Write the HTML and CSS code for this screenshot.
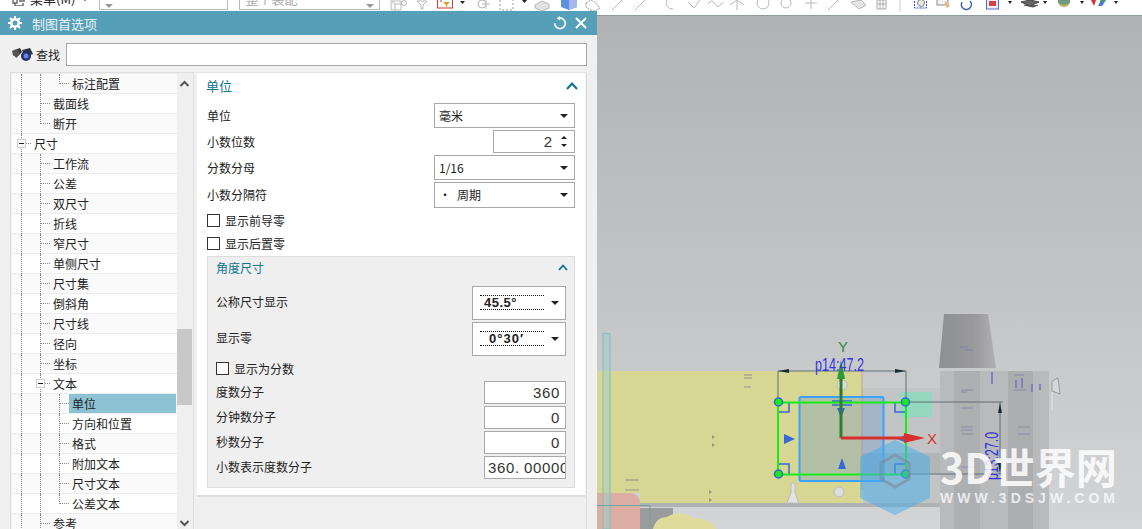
FILE: index.html
```html
<!DOCTYPE html>
<html lang="zh-CN">
<head>
    <meta charset="UTF-8" />
    <title>制图首选项</title>
    <link rel="stylesheet" href="styles.css">
</head>
<body>

<!-- top toolbar, mostly hidden behind the dialog -->
<div class="toolbar">
    <div class="menu-btn">
        <svg class="menu-icon" width="14" height="10" viewBox="0 0 14 10"><path d="M1 1h4v6H1zM7 2h6M7 5h6M3 7v3h8V7" fill="none" stroke="#666" stroke-width="1.4"/></svg>
        <span>菜单(M)</span><span class="caret"></span>
    </div>
    <div class="tb-select wide"><span class="arrow grey"></span></div>
    <div class="tb-select"><span class="tb-text">整个装配</span><span class="arrow grey"></span></div>
    <svg class="tb-icons" width="762" height="15" viewBox="380 0 762 15">
        <g fill="none" stroke="#b8b8b8">
            <path d="M391 1h10v9h-10zM391 1l4 3h6M395 4v6"/>
            <circle cx="404" cy="3" r="2.5"/>
            <path d="M417 1h10l-4 4v4h-2V5z"/>
            <path d="M482 4h8M486 0v9"/><circle cx="482" cy="4" r="4"/>
            <path d="M500 0v10h13V0" stroke-dasharray="2 2" stroke="#999"/>
            <path d="M535 5l7-4 7 3v4l-7 3-7-3z" fill="#e2e2e2"/>
            <path d="M586 3l5-3 5 3 4 5-5 3-5-1-4-3z" stroke-dasharray="2 1" stroke="#999"/>
            <path d="M612 10l10-10M635 10l10-10M667 0a6 6 0 0 0 6 9M688 2l6 6 6-8M708 4q4-6 7 0t8-2M730 5l7-5 7 5M737 1v9"/>
            <circle cx="763" cy="3" r="6"/>
            <circle cx="786" cy="3" r="5"/>
            <path d="M805 3h12M811 0v9M828 10l10-10"/>
            <path d="M851 2l10-2 5 5-7 4z" fill="#e6e6e6"/>
            <path d="M877 0h9v9h-9zM880 0v9M883 0v9M877 4h9" stroke="#aaa"/>
            <path d="M900 0v12" stroke="#ccc"/>
        </g>
        <rect x="437.5" y="-3" width="15" height="11" fill="#fff" stroke="#c8383c"/>
        <path d="M443 2h7l-3 3v2h-1V5z" fill="#d8a020"/>
        <path d="M440 1h2" stroke="#c8383c"/>
        <path d="M561 -2l8-2 8 2v9l-8 3-8-3z" fill="#5b8fe0"/>
        <path d="M569 0l8-2v9l-8 3z" fill="#a8b8ea"/>
        <rect x="914.5" y="-2" width="12" height="10" fill="none" stroke="#2a4fd8" stroke-dasharray="2 1"/>
        <circle cx="921" cy="3" r="3.5" fill="#e6e6e6" stroke="#888"/>
        <rect x="937" y="-1" width="11" height="6" fill="#f2f2f2" stroke="#8a8aa0"/>
        <path d="M946 1l4 5-3 2-3-4z" fill="#e3b98a"/>
        <path d="M962 2a5 5 0 1 0 8-1" fill="none" stroke="#3a5fb0" stroke-width="1.5"/>
        <rect x="986.5" y="-2" width="12" height="11" fill="#eef" stroke="#5a6ac8"/>
        <rect x="989" y="1" width="7" height="5" fill="#d84040"/>
        <path d="M1021 2l9-2 9 2-9 4zM1024 5l9 2 5-2" fill="#666" stroke="#444"/>
        <ellipse cx="1064" cy="1" rx="6" ry="6" fill="#b8b060"/>
        <path d="M1058 3q6 3 12 0v-3h-12z" fill="#6f9a80"/>
        <path d="M1091 0h5l-2 6z" fill="#d83030"/>
        <path d="M1095 0l3 6 3-6 5 0-4 6h-4z" fill="#5078d0"/>
        <path d="M1100 1l5-1" stroke="#40a040"/>
        <g fill="#222">
            <path d="M460 1h5l-2.500 3zM522 0h5l-2.500 3zM1008 1h4l-2 3zM1043 1h4l-2 3zM1080 1h4l-2 3zM1114 1h4l-2 3z"/>
        </g>
    </svg>
</div>

<!-- graphics area -->
<div class="canvas">
    <svg class="scene" width="1142" height="513" viewBox="0 16 1142 513">
        <defs>
            <linearGradient id="bg" x1="0" y1="0" x2="0" y2="1">
                <stop offset="0" stop-color="#b1b2b4"/>
                <stop offset="1" stop-color="#d3d4d6"/>
            </linearGradient>
            <linearGradient id="cone" x1="0" y1="0" x2="1" y2="0">
                <stop offset="0" stop-color="#8e8f91"/>
                <stop offset=".6" stop-color="#99999b"/>
                <stop offset="1" stop-color="#b0b0b2"/>
            </linearGradient>
        </defs>
        <rect x="597" y="16" width="545" height="513" fill="url(#bg)"/>

        <!-- part behind -->
        <rect x="863" y="388" width="78" height="117" fill="#c3c4c6"/>
        <rect x="863" y="453" width="78" height="20" fill="#b3b4b6"/>
        <rect x="597" y="503" width="344" height="4" fill="#b0b1b3"/>
        <rect x="640" y="508" width="33" height="21" fill="#9a9b9d"/>
        <path d="M597 529v-36h32q11 0 11 12v24z" fill="#dcaea3"/>
        <path d="M653 529q3-12 14-12 6-4 14-3 8 0 12 4 18 0 23 11z" fill="#dedb9b"/>

        <!-- yellow sheet -->
        <rect x="597" y="371" width="265" height="122" fill="#d8d693"/>
        <rect x="640" y="493" width="222" height="10" fill="#d8d693"/>
        <rect x="861" y="371" width="2" height="118" fill="#c9b8a0"/>
        <path d="M744 375h8M744 378h8M744 387h7M625 480h14M625 490h14" stroke="#aaa98a" stroke-width="1.500"/>
        <path d="M712 435l3 2-3 2zM712 443l3 2-3 2zM709 490l3 2-3 2zM709 498l3 2-3 2z" fill="#99987a"/>
        <path d="M603 333l7 1v195h-7z" fill="#a0cfc5" fill-opacity=".5" stroke="#7fbfc0"/>
        <path d="M597 505.500h53v24" fill="none" stroke="#6fa5a5" stroke-width="1"/>

        <!-- tall part on the right -->
        <rect x="940" y="371" width="109" height="158" fill="#b9babc"/>
        <rect x="954" y="371" width="26" height="158" fill="#aeafb1"/>
        <rect x="1008" y="371" width="25" height="158" fill="#acadaf"/>
        <path d="M944 314h44l8 54h-57z" fill="url(#cone)"/>
        <path d="M960 347h8M965 350h8" stroke="#7f7fa8"/>
        <g stroke="#8a8aa8">
            <path d="M961 390h12M961 392h6M961 408h12M961 430h12M961 427h12M961 467h14M961 434h12M1018 427h12M1018 434h12M1014 375h10M1014 390h12M1014 462h12"/>
            <path d="M992 372v12M1016 380v8M1022 378v10M1032 384v8M1040 384v6" stroke="#8080c0" stroke-width="2"/>
        </g>
        <path d="M1052 381l6-3 2 16-8-3z" fill="#d6d7d9" stroke="#999"/>
        <path d="M1052 392v18" stroke="#d8d8da" stroke-width="2"/>

        <!-- sketch handles -->
        <rect x="900" y="392" width="32" height="25" fill="#94d8c0"/>
        <rect x="799.500" y="397" width="84" height="84" rx="1.500" fill="#5e8fd0" fill-opacity=".3" stroke="#3aa2fa" stroke-width="2"/>
        <path d="M778 402v-31h128v31M906 402h97M1000 402v72M906 474h97" fill="none" stroke="#5d6f75"/>
        <path d="M778 371l11-2v4zM906 371l-11-2v4zM1000 403l-2 10h4zM1000 473l-2-10h4z" fill="#1a2a33"/>
        <circle cx="842" cy="385" r="5" fill="#ddd" stroke="#bbb"/>
        <circle cx="839" cy="492" r="5" fill="#ddd" stroke="#bbb"/>
        <path d="M791 493l-4 10h12l-4-10v-10h-4z" fill="#e3e3e5" stroke="#bbb"/>
        <g fill="none" stroke="#3468d8" stroke-width="1.500">
            <path d="M779 412h10v-10M895 402v10h10M779 464h10v10M895 474v-10h10"/>
            <path d="M832 401h20M832 405h20"/>
        </g>
        <path d="M784 434l11 5-11 5zM842 458l4 11h-8zM837 408h8l-4 10zM907 434v9l-10-4z" fill="#3468d8"/>
        <rect x="778" y="402.500" width="128" height="72" fill="none" stroke="#17ee17" stroke-width="2"/>
        <g fill="#17ee17" stroke="#3468d8" stroke-width="1.500">
            <circle cx="778.500" cy="402" r="4"/>
            <circle cx="905.500" cy="402" r="4"/>
            <circle cx="778.500" cy="474" r="4"/>
            <circle cx="905.500" cy="474" r="4"/>
        </g>

        <!-- axes -->
        <path d="M841 438v-62" stroke="#2f7d2f" stroke-width="3"/>
        <path d="M841 360l-4 19h8z" fill="#2f9a38"/>
        <path d="M841 438h66" stroke="#d83030" stroke-width="3"/>
        <path d="M925 438l-21-5v10z" fill="#d83030"/>
        <text class="axis-y" x="838" y="352">Y</text>
        <text class="axis-x" x="927" y="444">X</text>
        <text class="dim" x="815" y="371" textLength="49" lengthAdjust="spacingAndGlyphs">p14:47.2</text>
        <text class="dim" transform="translate(998 480) rotate(-90)" textLength="48" lengthAdjust="spacingAndGlyphs">p13:27.0</text>

        <!-- watermark -->
        <path d="M895 440l35 17v41l-35 17-35-17v-41z" fill="#43aeea" fill-opacity=".5"/>
        <path d="M881 463l14-8 14 8v16l-14 8-14-8z" fill="none" stroke="#7a8a96" stroke-opacity=".6" stroke-width="3"/>
        <text class="wm-big" x="940" y="484" textLength="177" lengthAdjust="spacingAndGlyphs">3D世界网</text>
        <text class="wm-small" x="940" y="503" textLength="175" lengthAdjust="spacing">WWW.3DSJW.COM</text>
    </svg>
</div>

<!-- dialog -->
<div class="dialog">
    <div class="titlebar">
        <svg class="gear" width="14" height="14" viewBox="0 0 14 14"><circle cx="7" cy="7" r="3.800" fill="none" stroke="#fff" stroke-width="2.600"/><path d="M7 0v3M7 11v3M0 7h3M11 7h3M2 2l2 2M10 10l2 2M12 2l-2 2M4 10l-2 2" stroke="#fff" stroke-width="2"/></svg>
        <span class="title-text">制图首选项</span>
        <svg class="reset" width="14" height="14" viewBox="0 0 14 14"><path d="M7 2a5.300 5.300 0 1 1-5.300 5.300" fill="none" stroke="#e8f3f6" stroke-width="1.800"/><path d="M7 0v4.500L3.500 2.200z" fill="#e8f3f6"/></svg>
        <svg class="close" width="12" height="12" viewBox="0 0 12 12"><path d="M1 1l10 10M11 1L1 11" stroke="#fff" stroke-width="2"/></svg>
    </div>

    <div class="search">
        <svg class="binoc" width="23" height="15" viewBox="0 0 23 15">
            <path d="M1 4l8-3 2 4-6 6z" fill="#333"/>
            <path d="M11 3l8-2 3 6-8 3z" fill="#2f3540"/>
            <circle cx="5" cy="6" r="3.500" fill="#555"/>
            <circle cx="15" cy="9" r="5" fill="#1f2f70"/>
            <circle cx="15" cy="9" r="2.500" fill="#6d86d8"/>
        </svg>
        <span>查找</span>
        <div class="search-box"></div>
    </div>

    <div class="panes">
        <div class="tree">
            <div class="tree-rows">
                <div class="row alt"><i class="v"></i><i class="v"></i><i class="tick end"></i><span class="lbl">标注配置</span></div>
                <div class="row"><i class="v"></i><i class="tick"></i><span class="lbl">截面线</span></div>
                <div class="row alt"><i class="v"></i><i class="tick end"></i><span class="lbl">断开</span></div>
                <div class="row"><i class="tick"><b class="minus"></b></i><span class="lbl">尺寸</span></div>
                <div class="row alt"><i class="v"></i><i class="tick"></i><span class="lbl">工作流</span></div>
                <div class="row"><i class="v"></i><i class="tick"></i><span class="lbl">公差</span></div>
                <div class="row alt"><i class="v"></i><i class="tick"></i><span class="lbl">双尺寸</span></div>
                <div class="row"><i class="v"></i><i class="tick"></i><span class="lbl">折线</span></div>
                <div class="row alt"><i class="v"></i><i class="tick"></i><span class="lbl">窄尺寸</span></div>
                <div class="row"><i class="v"></i><i class="tick"></i><span class="lbl">单侧尺寸</span></div>
                <div class="row alt"><i class="v"></i><i class="tick"></i><span class="lbl">尺寸集</span></div>
                <div class="row"><i class="v"></i><i class="tick"></i><span class="lbl">倒斜角</span></div>
                <div class="row alt"><i class="v"></i><i class="tick"></i><span class="lbl">尺寸线</span></div>
                <div class="row"><i class="v"></i><i class="tick"></i><span class="lbl">径向</span></div>
                <div class="row alt"><i class="v"></i><i class="tick"></i><span class="lbl">坐标</span></div>
                <div class="row"><i class="v"></i><i class="tick"><b class="minus"></b></i><span class="lbl">文本</span></div>
                <div class="row alt"><i class="v"></i><i class="v"></i><i class="tick"></i><span class="lbl selected">单位</span></div>
                <div class="row"><i class="v"></i><i class="v"></i><i class="tick"></i><span class="lbl">方向和位置</span></div>
                <div class="row alt"><i class="v"></i><i class="v"></i><i class="tick"></i><span class="lbl">格式</span></div>
                <div class="row"><i class="v"></i><i class="v"></i><i class="tick"></i><span class="lbl">附加文本</span></div>
                <div class="row alt"><i class="v"></i><i class="v"></i><i class="tick"></i><span class="lbl">尺寸文本</span></div>
                <div class="row"><i class="v"></i><i class="v"></i><i class="tick end"></i><span class="lbl">公差文本</span></div>
                <div class="row alt"><i class="v"></i><i class="tick"></i><span class="lbl">参考</span></div>
            </div>
            <div class="scrollbar">
                <svg class="sb-up" width="11" height="7" viewBox="0 0 11 7"><path d="M1.500 6l4-4 4 4" fill="none" stroke="#555" stroke-width="2"/></svg>
                <div class="sb-thumb"></div>
                <svg class="sb-down" width="11" height="7" viewBox="0 0 11 7"><path d="M1.500 1l4 4 4-4" fill="none" stroke="#555" stroke-width="2"/></svg>
            </div>
        </div>

        <div class="settings">
            <div class="group-head">
                <span>单位</span>
                <svg width="12" height="8" viewBox="0 0 12 8"><path d="M1 7l5-5.500L11 7" fill="none" stroke="#0f6f94" stroke-width="2"/></svg>
            </div>
            <div class="fields">
                <div class="field h25"><span>单位</span><div class="select w141"><span>毫米</span><span class="arrow"></span></div></div>
                <div class="field h23"><span>小数位数</span><div class="spin"><span class="spin-val">2</span><span class="spin-btns"><b class="up"></b><b class="down"></b></span></div></div>
                <div class="field h25"><span>分数分母</span><div class="select w141"><span>1/16</span><span class="arrow"></span></div></div>
                <div class="field h26"><span>小数分隔符</span><div class="select w141"><span class="sep-val">・<span class="sep-name">周期</span></span><span class="arrow"></span></div></div>
            </div>
            <div class="check first"><span class="box"></span>显示前导零</div>
            <div class="check"><span class="box"></span>显示后置零</div>

            <div class="subgroup">
                <div class="subgroup-head">
                    <span>角度尺寸</span>
                    <svg width="10" height="7" viewBox="0 0 10 7"><path d="M1 6l4-4.500L9 6" fill="none" stroke="#0f6f94" stroke-width="1.800"/></svg>
                </div>
                <div class="fields">
                    <div class="field h34"><span>公称尺寸显示</span><div class="select big"><span class="sample">45.5°</span><span class="arrow"></span></div></div>
                    <div class="field h34"><span>显示零</span><div class="select big"><span class="sample zero">0°30′</span><span class="arrow"></span></div></div>
                </div>
                <div class="check inner"><span class="box"></span>显示为分数</div>
                <div class="fields">
                    <div class="field h23"><span>度数分子</span><div class="num">360</div></div>
                    <div class="field h23"><span>分钟数分子</span><div class="num">0</div></div>
                    <div class="field h23"><span>秒数分子</span><div class="num">0</div></div>
                    <div class="field h23"><span>小数表示度数分子</span><div class="num clip">360<span class="dot">.</span>00000000</div></div>
                </div>
            </div>
        </div>
    </div>
</div>

</body>
</html>
```

FILE: styles.css
```css
* { box-sizing: border-box; margin: 0; padding: 0; }
body {
    font-family: "Noto Sans CJK SC", "Liberation Sans", sans-serif;
    font-size: 12px;
    color: #222;
    display: flex;
    flex-direction: column;
    height: 100vh;
    overflow: hidden;
    position: relative;
    background: #fff;
}

/* toolbar */
.toolbar {
    display: flex;
    height: 16px;
    flex: none;
    background: #fff;
    border-bottom: 1px solid #8f9a9e;
    overflow: hidden;
}
.menu-btn {
    width: 99px;
    padding-left: 12px;
    display: flex;
    gap: 4px;
    height: 18px;
    margin-top: -10px;
    line-height: 18px;
    align-items: center;
    font-size: 13px;
}
.menu-icon { margin-top: 4px; }
.caret {
    width: 0; height: 0;
    border: 3px solid transparent;
    border-top: 3px solid #222;
    margin: 4px 0 0 3px;
}
.tb-select {
    width: 141px;
    height: 22px;
    margin: -12px 0 0 11px;
    border: 1px solid #bbb;
    display: flex;
    align-items: center;
    justify-content: space-between;
    padding: 0 5px;
    color: #aaa;
    font-size: 13px;
    background: #fff;
}
.tb-select.wide { width: 130px; margin-left: 0; }
.tb-text { line-height: 18px; }
.tb-icons { flex: none; display: block; }

/* graphics window */
.canvas { flex: 1; overflow: hidden; }
.scene { display: block; }
.scene text { font-family: "Liberation Sans", sans-serif; }
.scene .axis-y { font-size: 15px; fill: #2f8a3a; }
.scene .axis-x { font-size: 15px; fill: #d83030; }
.scene .dim { font-size: 18px; fill: #3434e0; }
.scene .wm-big {
    font-family: "Noto Sans CJK SC", sans-serif;
    font-size: 42px;
    font-weight: 700;
    fill: #fff;
    fill-opacity: .85;
}
.scene .wm-small { font-size: 14px; font-weight: 700; fill: #fff; fill-opacity: .75; }

/* dialog */
.dialog {
    position: absolute;
    left: 0;
    top: 11px;
    bottom: 0;
    width: 597px;
    background: #f0f0f0;
    display: flex;
    flex-direction: column;
    overflow: hidden;
}
.titlebar {
    height: 24px;
    flex: none;
    background: #559fb9;
    display: flex;
    align-items: center;
    padding: 0 10px 0 8px;
    color: #eaf3f6;
    font-size: 13px;
}
.title-text { margin-left: 10px; flex: 1; }
.reset { margin-right: 8px; }

.search {
    display: flex;
    align-items: center;
    height: 23px;
    margin: 8px 10px 6px 11px;
    flex: none;
}
.search span { margin-left: 2px; width: 30px; }
.search-box {
    flex: 1;
    height: 23px;
    background: #fff;
    border: 1px solid #a8a8a8;
}

.panes {
    flex: 1;
    width: 587px;
    display: flex;
    gap: 3px;
    margin-left: 10px;
    width: 577px;
    border-right: 1px solid #dcdcdc;
    min-height: 0;
}

/* tree */
.tree {
    width: 184px;
    display: flex;
    background: #f0f0f0;
    border: 1px solid #dedede;
    border-bottom: 0;
    padding: 1px 1px 0 1px;
    overflow: hidden;
}
.tree-rows { width: 165px; flex: none; background: #fff; }
.row {
    height: 20px;
    display: flex;
    padding-left: 9px;
    border-bottom: 1px solid #ececec;
    background: #fff;
}
.row.alt { background: #fafafa; }
.row i { display: block; flex: none; height: 20px; position: relative; }
.row .v { width: 19px; border-left: 1px dotted #888; }
.row .tick { width: 10px; border-left: 1px dotted #888; }
.row .tick.end { height: 10px; }
.row .tick::after {
    content: "";
    position: absolute;
    left: 0;
    top: 9px;
    width: 9px;
    border-top: 1px dotted #888;
}
.minus {
    position: absolute;
    z-index: 1;
    left: -5px;
    top: 5px;
    width: 9px;
    height: 9px;
    background: linear-gradient(#222, #222) center / 5px 1px no-repeat #fff;
    border: 1px solid #ccc;
}
.lbl {
    flex: 1;
    height: 19px;
    line-height: 19px;
    padding-left: 3px;
    white-space: nowrap;
}
.lbl.selected { background: #8cc2d1; margin-right: 1px; }

.scrollbar {
    width: 15px;
    flex: none;
    position: relative;
    background: #f0f0f0;
}
.sb-up { position: absolute; left: 2px; top: 6px; }
.sb-down { position: absolute; left: 2px; top: 446px; }
.sb-thumb {
    position: absolute;
    left: 0;
    top: 255px;
    width: 15px;
    height: 76px;
    background: #c8c8c8;
}

/* settings */
.settings {
    width: 388px;
    height: 425px;
    background: #fff;
    border-top: 1px solid #e2e2e2;
    border-bottom: 2px solid #ddd;
    padding: 0 10px;
}
.group-head {
    height: 30px;
    display: flex;
    justify-content: space-between;
    align-items: center;
    padding: 0 0 5px 0;
    margin-left: -1px;
    font-size: 13px;
    color: #0e7493;
}
.group-head svg { margin-right: -3px; }
.fields { display: flex; flex-direction: column; gap: 2px; }
.field {
    display: flex;
    justify-content: space-between;
    align-items: center;
    line-height: 20px;
}
.subgroup .field > span { margin-top: -1px; }
.subgroup .h34 > span { margin-top: -3px; }
.h23 { height: 23px; }
.h25 { height: 25px; }
.h26 { height: 26px; }
.h34 { height: 34px; }
.select {
    height: 100%;
    background: #fff;
    border: 1px solid #a8a8a8;
    display: flex;
    align-items: center;
    justify-content: space-between;
    padding: 0 6px 0 4px;
}
.w141 { width: 141px; }
.big { width: 94px; padding: 0 6px 0 7px; }
.sep-name { margin-left: 6px; }
.arrow {
    width: 0; height: 0;
    border-left: 4px solid transparent;
    border-right: 4px solid transparent;
    border-top: 4px solid #222;
}
.arrow.grey { border-top-color: #999; margin-top: 14px; }
.sample {
    width: 64px;
    height: 15px;
    margin-top: -2px;
    border-top: 1px dotted #111;
    border-bottom: 1px dotted #111;
    font-family: "Liberation Sans", sans-serif;
    font-size: 13px;
    font-weight: 700;
    letter-spacing: .5px;
    line-height: 13px;
    padding-left: 4px;
}
.sample.zero { padding-left: 9px; letter-spacing: 1px; }
.spin {
    width: 82px;
    height: 100%;
    background: #fff;
    border: 1px solid #a8a8a8;
    display: flex;
    justify-content: flex-end;
    align-items: center;
}
.spin-val { font-family: "Liberation Sans", sans-serif; font-size: 15px; margin-right: 6px; color: #333; }
.spin-btns { width: 16px; display: flex; flex-direction: column; gap: 5px; align-items: center; padding-right: 4px; }
.spin-btns b { width: 0; height: 0; border-left: 3px solid transparent; border-right: 3px solid transparent; }
.spin-btns .up { border-bottom: 3px solid #222; }
.spin-btns .down { border-top: 3px solid #222; }
.num {
    width: 82px;
    height: 100%;
    background: #fff;
    border: 1px solid #a8a8a8;
    font-family: "Liberation Sans", sans-serif;
    font-size: 15px;
    letter-spacing: .66px;
    line-height: 21px;
    text-align: right;
    color: #333;
    padding: 0 5px;
    overflow: hidden;
    white-space: nowrap;
}
.num.clip { text-align: left; padding: 0 0 0 3px; }
.dot { letter-spacing: 4.8px; }
.check {
    height: 23px;
    display: flex;
    align-items: center;
    gap: 5px;
    line-height: 20px;
}
.check.first { margin-top: 1px; }
.check.inner { height: 25px; }
.box {
    width: 13px;
    height: 13px;
    background: #fff;
    border: 1px solid #333;
    flex: none;
}
.subgroup {
    height: 232px;
    margin-top: 1px;
    background: #efefef;
    border: 1px solid #ddd;
    padding: 0 8px;
}
.subgroup-head {
    height: 29px;
    display: flex;
    justify-content: space-between;
    align-items: center;
    padding-bottom: 8px;
    color: #0e7493;
}
.subgroup-head svg { margin-right: -2px; }
```
